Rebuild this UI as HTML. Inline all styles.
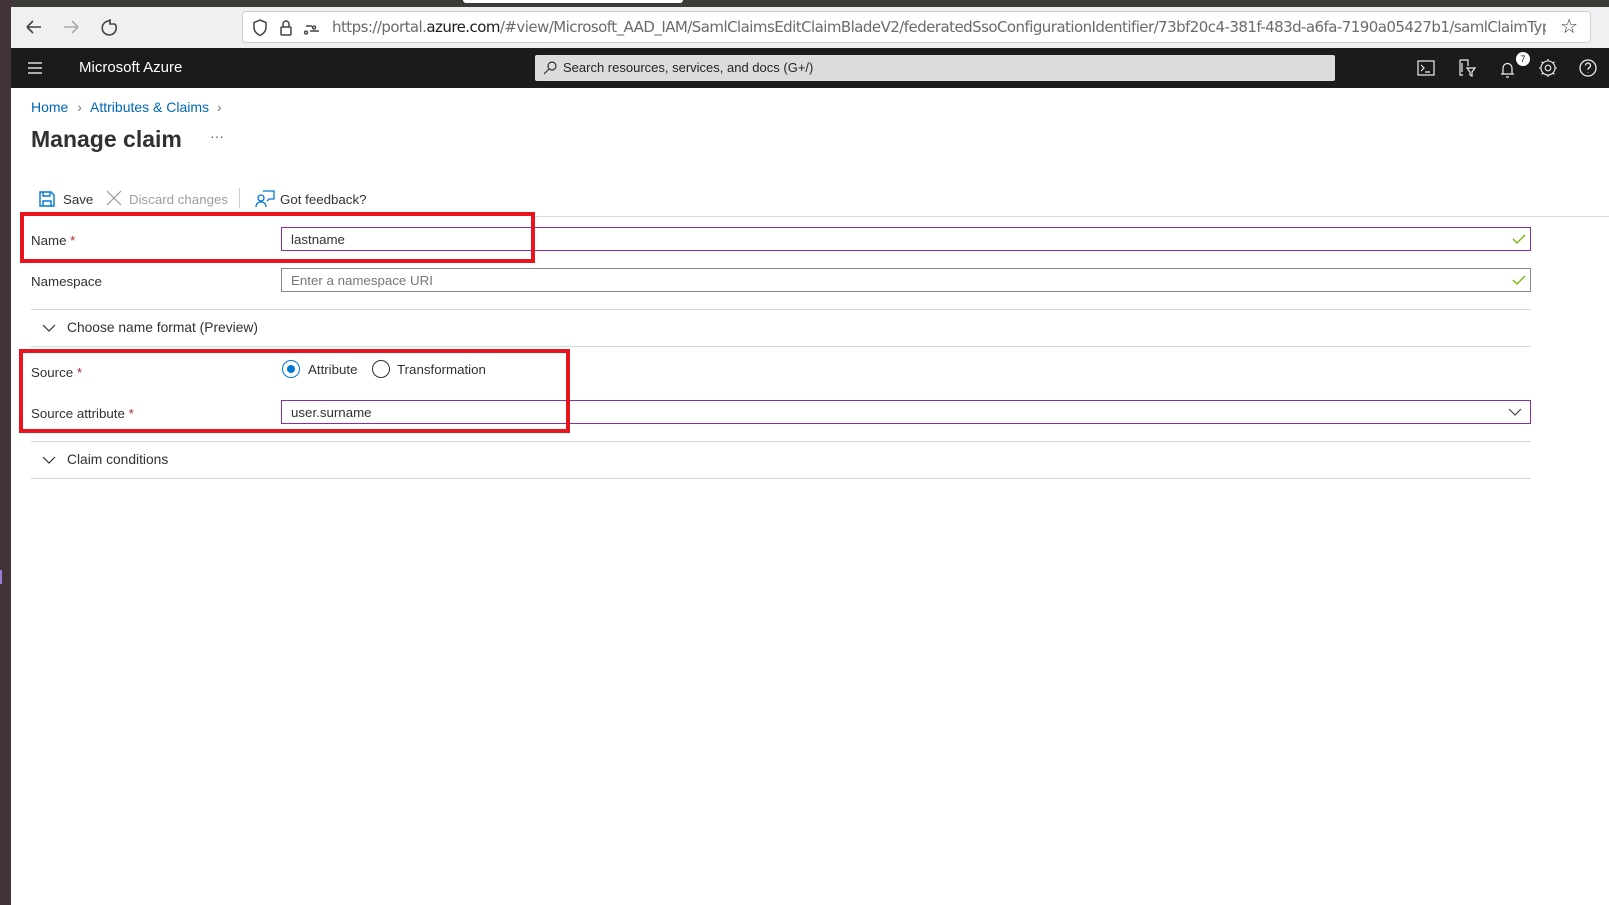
<!DOCTYPE html>
<html><head><meta charset="utf-8"><style>
*{margin:0;padding:0;box-sizing:border-box}
body{width:1609px;height:905px;overflow:hidden;background:#fff;font-family:"Liberation Sans",sans-serif;position:relative;color:#323130}
.abs{position:absolute}
.lbl{position:absolute;left:31px;font-size:13.3px;color:#323130}
.req{color:#a4262c}
.inp{position:absolute;left:281px;width:1250px;height:24px;border:1px solid #8a2da5;font-size:13.3px;padding:4px 9px;color:#323130}
.sep{position:absolute;left:31px;width:1500px;height:1px;background:#d6d6d6}
.red{position:absolute;border:4px solid #e8141e}
.hdr svg{position:absolute}
</style></head><body>
<div class="abs" style="left:0;top:0;width:1609px;height:8px;background:#3d3b38"></div>
<div class="abs" style="left:463px;top:0;width:220px;height:3px;background:#fff;border-radius:0 0 3px 3px"></div>
<div class="abs" style="left:0;top:0;width:11px;height:905px;background:#433238"></div>
<div class="abs" style="left:0;top:570px;width:2px;height:14px;background:#9b7ed6"></div>
<div class="abs" style="left:11px;top:7px;width:1598px;height:41px;background:#f0eff1"></div>
<svg class="abs" style="left:24px;top:17px" width="110" height="22" fill="none" stroke="#444" stroke-width="1.6">
<path d="M3 10h14M3 10l6-6M3 10l6 6"/>
<path d="M40 10h14M54 10l-6-6M54 10l-6 6" stroke="#aaa"/>
<path d="M88 4a7 7 0 1 0 5 3M88 2v5h5" transform="translate(-2,0)"/>
</svg>
<div class="abs" style="left:242px;top:11px;width:1349px;height:32px;background:#fff;border:1px solid #cfcfd3;border-radius:4px;overflow:hidden">
<svg class="abs" style="left:8px;top:6px" width="80" height="20" fill="none" stroke="#444" stroke-width="1.5">
<path d="M9 2l6 2.5v5c0 4-3 6.5-6 8-3-1.5-6-4-6-8v-5z"/>
<rect x="30" y="9" width="10" height="8" rx="1"/><path d="M32 9V6a3 3 0 0 1 6 0v3"/>
<path d="M55 8h6M63 8a1.5 1.5 0 1 0 .1 0M55 13a1.5 1.5 0 1 0 .1 0M59 13h9"/>
</svg>
<div class="abs" style="left:89px;top:6px;font-size:15px;color:#6b6b6b;white-space:nowrap;font-family:'DejaVu Sans','Liberation Sans',sans-serif;letter-spacing:-0.55px">https://portal.<span style="color:#1c1c1c">azure.com</span>/#view/Microsoft_AAD_IAM/SamlClaimsEditClaimBladeV2/federatedSsoConfigurationIdentifier/73bf20c4-381f-483d-a6fa-7190a05427b1/samlClaimTyp</div>
<div class="abs" style="right:0;top:0;width:44px;height:30px;background:#fff"></div>
<div class="abs" style="right:12px;top:2px;font-size:20px;color:#333">☆</div>
</div>
<div class="abs hdr" style="left:11px;top:48px;width:1598px;height:40px;background:#1b1b1b">
<svg style="left:16px;top:13px" width="16" height="14" stroke="#ddd" stroke-width="1.4"><path d="M1 2h14M1 7h14M1 12h14"/></svg>
<div class="abs" style="left:68px;top:11px;color:#fff;font-size:15px">Microsoft Azure</div>
<div class="abs" style="left:524px;top:7px;width:800px;height:26px;background:#dcdcdc;border-radius:2px"></div>
<svg style="left:532px;top:13px" width="14" height="14" fill="none" stroke="#333" stroke-width="1.2"><circle cx="9" cy="5" r="4"/><path d="M6 8l-5 5"/></svg>
<div class="abs" style="left:552px;top:12px;font-size:13px;color:#252525">Search resources, services, and docs (G+/)</div>
<svg style="left:1406px;top:10px" width="18" height="20" fill="none" stroke="#eee" stroke-width="1.2"><rect x="1" y="3" width="16" height="14"/><path d="M4 7l3 3-3 3M8 14h5"/></svg>
<svg style="left:1447px;top:10px" width="20" height="22" fill="none" stroke="#eee" stroke-width="1.2"><path d="M2 2h8v6M2 2v15h3M4 5v9M9 10h8l-3 4v4l-2-1v-3z"/></svg>
<svg style="left:1488px;top:10px" width="18" height="22" fill="none" stroke="#eee" stroke-width="1.2"><path d="M2 16h13M4 16v-6a4.5 4.5 0 0 1 9 0v6M7 19h3"/></svg>
<div class="abs" style="left:1505px;top:4px;width:14px;height:14px;border-radius:50%;background:#fff;color:#1b1b1b;font-size:9px;text-align:center;line-height:14px">7</div>
<svg style="left:1526px;top:9px" width="22" height="22" fill="none" stroke="#eee" stroke-width="1.1"><circle cx="11" cy="11" r="7"/><circle cx="11" cy="11" r="2.8"/><path d="M11 2v2M11 18v2M2 11h2M18 11h2M4.6 4.6l1.4 1.4M16 16l1.4 1.4M4.6 17.4L6 16M16 6l1.4-1.4"/></svg>
<svg style="left:1566px;top:9px" width="22" height="22" fill="none" stroke="#eee" stroke-width="1.3"><circle cx="11" cy="11" r="8"/><path d="M8.5 8.5a2.5 2.5 0 1 1 3.5 2.3c-1 .5-1 1-1 2M11 15v.5"/></svg>
</div>
<div class="abs" style="left:31px;top:99px;font-size:14px;color:#0067b8">Home <span style="color:#777;margin:0 5px">&#x203A;</span> Attributes &amp; Claims <span style="color:#777;margin-left:4px">&#x203A;</span></div>
<div class="abs" style="left:31px;top:126px;font-size:23px;font-weight:600;color:#323130">Manage claim</div>
<div class="abs" style="left:210px;top:128px;font-size:14px;color:#555">···</div>
<svg class="abs" style="left:38px;top:190px" width="18" height="18" fill="none" stroke="#0078d4" stroke-width="1.4"><path d="M2 2h11l3 3v11H2z"/><path d="M5 2v4h7V2M5 16v-5h8v5"/></svg>
<div class="abs" style="left:63px;top:192px;font-size:13.3px">Save</div>
<svg class="abs" style="left:106px;top:190px" width="16" height="16" stroke="#999" stroke-width="1.2"><path d="M1 1l14 14M15 1L1 15"/></svg>
<div class="abs" style="left:129px;top:192px;font-size:13.3px;color:#a19f9d">Discard changes</div>
<div class="abs" style="left:239px;top:188px;width:1px;height:20px;background:#ccc"></div>
<svg class="abs" style="left:255px;top:189px" width="20" height="20" fill="none" stroke="#0078d4" stroke-width="1.3"><circle cx="6" cy="9" r="3"/><path d="M1 18c0-3 2-5 5-5s5 2 5 5M8 2h11v8h-5l-2 2"/></svg>
<div class="abs" style="left:280px;top:192px;font-size:13.3px">Got feedback?</div>
<div class="abs" style="left:535px;top:216px;width:1074px;height:1px;background:#ddd"></div>
<div class="lbl" style="top:233px">Name <span class="req">*</span></div>
<div class="inp" style="top:227px">lastname</div>
<svg class="abs" style="left:1512px;top:233px" width="14" height="12" fill="none" stroke="#6bb700" stroke-width="1.3"><path d="M1 6l4 4 8-8"/></svg>
<div class="lbl" style="top:274px">Namespace</div>
<div class="inp" style="top:268px;border-color:#8a8886;color:#777">Enter a namespace URI</div>
<svg class="abs" style="left:1512px;top:274px" width="14" height="12" fill="none" stroke="#6bb700" stroke-width="1.3"><path d="M1 6l4 4 8-8"/></svg>
<div class="sep" style="top:309px"></div>
<svg class="abs" style="left:42px;top:323px" width="14" height="10" fill="none" stroke="#323130" stroke-width="1.2"><path d="M1 2l6 6 6-6"/></svg>
<div class="abs" style="left:67px;top:320px;font-size:13.8px">Choose name format (Preview)</div>
<div class="sep" style="top:346px"></div>
<div class="lbl" style="top:365px">Source <span class="req">*</span></div>
<div class="abs" style="left:282px;top:360px;width:18px;height:18px;border:1.5px solid #0078d4;border-radius:50%"></div>
<div class="abs" style="left:287px;top:365px;width:8px;height:8px;background:#0078d4;border-radius:50%"></div>
<div class="abs" style="left:308px;top:362px;font-size:13.3px">Attribute</div>
<div class="abs" style="left:372px;top:360px;width:18px;height:18px;border:1.5px solid #323130;border-radius:50%"></div>
<div class="abs" style="left:397px;top:362px;font-size:13.3px">Transformation</div>
<div class="lbl" style="top:406px">Source attribute <span class="req">*</span></div>
<div class="inp" style="top:400px">user.surname</div>
<svg class="abs" style="left:1508px;top:407px" width="14" height="10" fill="none" stroke="#444" stroke-width="1.2"><path d="M1 2l6 6 6-6"/></svg>
<div class="sep" style="top:441px"></div>
<svg class="abs" style="left:42px;top:455px" width="14" height="10" fill="none" stroke="#323130" stroke-width="1.2"><path d="M1 2l6 6 6-6"/></svg>
<div class="abs" style="left:67px;top:452px;font-size:13.8px">Claim conditions</div>
<div class="sep" style="top:478px"></div>
<div class="red" style="left:20px;top:212px;width:515px;height:51px"></div>
<div class="red" style="left:19px;top:349px;width:551px;height:84px"></div>
</body></html>
